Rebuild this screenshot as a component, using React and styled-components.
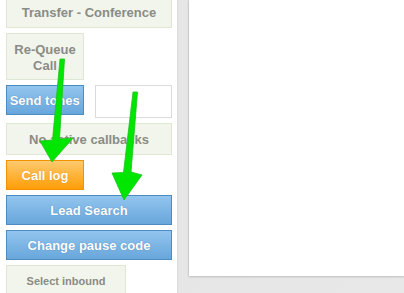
import React from 'react';
import styled, { createGlobalStyle, css } from 'styled-components';

const GlobalStyle = createGlobalStyle`
  html, body {
    margin: 0;
    padding: 0;
    overflow: hidden;
  }
  body {
    font-family: "Liberation Sans", Arial, sans-serif;
  }
`;

const Page = styled.div`
  position: relative;
  display: flex;
  width: 404px;
  height: 293px;
  overflow: hidden;
  background: #fff;
`;

const Sidebar = styled.div`
  width: 177px;
  box-sizing: border-box;
  padding: 0 5px 0 6px;
  background: #fff;
  overflow: hidden;
`;

const Stack = styled.div`
  display: flex;
  flex-direction: column;
  gap: 5px;
  margin-top: -3px;
`;

const Row = styled.div`
  display: flex;
  align-items: flex-start;
  gap: 11px;
`;

const variants = {
  plain: css`
    background: #f1f5eb;
    border: 1px solid #dee7d3;
    color: #8b8b86;
  `,
  blue: css`
    background: linear-gradient(#92c5ee, #68a6db);
    border: 1px solid #4d8bc3;
    color: #fff;
    text-shadow: 0 0 1px rgba(40, 80, 130, 0.5);
  `,
  orange: css`
    background: linear-gradient(#ffca6e, #ff9d07);
    border: 1px solid #f39200;
    color: #fff;
    text-shadow: 0 0 1px rgba(150, 80, 0, 0.4);
  `,
};

const Button = styled.div`
  box-sizing: border-box;
  display: flex;
  align-items: center;
  justify-content: center;
  text-align: center;
  width: ${({ $w }) => $w || '166px'};
  height: ${({ $h }) => $h || '30px'};
  font-size: ${({ $small }) => ($small ? '11px' : '13px')};
  line-height: ${({ $small }) => ($small ? '15px' : '15px')};
  font-weight: bold;
  ${({ $kind }) => variants[$kind || 'plain']}
`;

const TallButton = styled(Button)`
  align-items: flex-start;
  padding-top: 8px;
`;

const TwoLineButton = styled(Button)`
  line-height: 16px;
  padding-top: 2px;
`;

const ToneInput = styled.div`
  box-sizing: border-box;
  width: 78px;
  height: 33px;
  border: 1px solid #d9d9de;
  background: #fff;
`;

const Gutter = styled.div`
  flex: 1;
  background: linear-gradient(90deg, #d9d9d9 0, #e6e6e6 2px, #e8e8e8 100%);
  padding-left: 12px;
  padding-bottom: 17px;
  display: flex;
`;

const Card = styled.div`
  flex: 1;
  background: #fff;
  box-shadow: 0 1px 2px rgba(0, 0, 0, 0.18), -1px 0 1px rgba(0, 0, 0, 0.06);
`;

const Overlay = styled.svg`
  position: absolute;
  left: 0;
  top: 0;
  pointer-events: none;
`;

const Arrow = styled.polygon`
  fill: #00e600;
  stroke: #19c419;
  stroke-width: 0.8;
  stroke-linejoin: round;
`;

export default function App() {
  return (
    <Page>
      <GlobalStyle />
      <Sidebar>
        <Stack>
          <Button $h="31px">Transfer - Conference</Button>
          <TwoLineButton $w="78px" $h="47px">Re-Queue<br />Call</TwoLineButton>
          <Row>
            <Button $kind="blue" $w="78px">Send tones</Button>
            <ToneInput />
          </Row>
          <Button $h="32px">No active callbacks</Button>
          <Button $kind="orange" $w="78px">Call log</Button>
          <Button $kind="blue">Lead Search</Button>
          <Button $kind="blue">Change pause code</Button>
          <TallButton $w="120px" $h="40px" $small>Select inbound<br />groups</TallButton>
        </Stack>
      </Sidebar>
      <Gutter>
        <Card />
      </Gutter>
      <Overlay width="404" height="293" viewBox="0 0 404 293">
        <Arrow points="60,59 64.5,59 59.5,139 73,138 52,162 40,141 52.5,140" />
        <Arrow points="133,92 137.5,92 131,172 142,175 124,200 112,173 123.5,172.5" />
      </Overlay>
    </Page>
  );
}
